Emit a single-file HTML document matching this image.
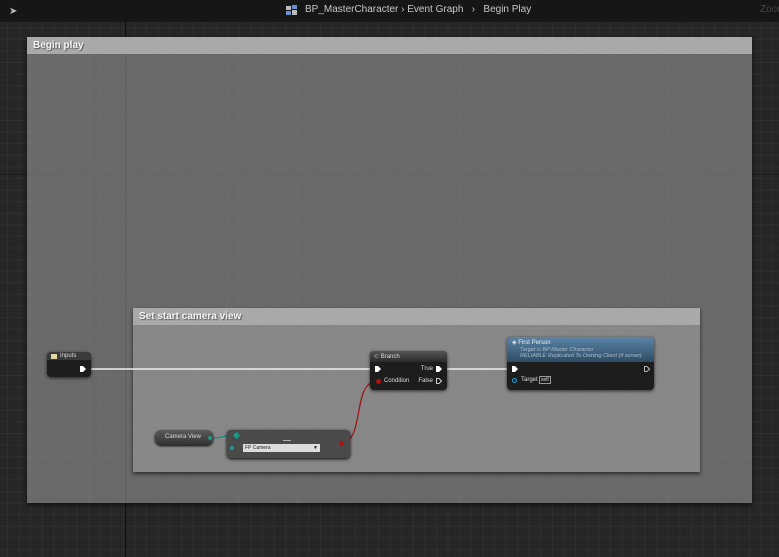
<!DOCTYPE html>
<html><head><meta charset="utf-8"><style>
*{margin:0;padding:0;box-sizing:border-box}
body{width:779px;height:557px;overflow:hidden;position:relative;font-family:"Liberation Sans",sans-serif;
background-color:#262626;
background-image:linear-gradient(90deg,rgba(255,255,255,0.035) 1px,transparent 1px),linear-gradient(0deg,rgba(255,255,255,0.035) 1px,transparent 1px);
background-size:11.6px 11.6px;background-position:7px 5px}
.abs{position:absolute}
.top{left:0;top:0;width:779px;height:22px;background:#161616;color:#c8c8c8;font-size:10px}
.cmt{background:rgba(150,150,150,0.6);box-shadow:0 2px 4px rgba(0,0,0,.6)}
.cmth{position:absolute;left:0;top:0;right:0;height:17px;background:#a9a9a9;color:#f4f4f4;font-weight:bold;font-size:10px;line-height:17px;padding-left:6px;text-shadow:1px 1px 1px #555}
.node{background:#1d1d1d;border-radius:4px;box-shadow:0 1px 3px rgba(0,0,0,.7);color:#ddd;font-size:6px}
</style></head><body>
<div class="abs" style="left:125px;top:22px;width:1px;height:535px;background:#0e0e0e"></div>
<div class="abs" style="left:0;top:174px;width:779px;height:1px;background:#1c1c1c"></div>
<div class="abs top">
<div class="abs" style="left:9px;top:6px;color:#bbb;font-size:10px">&#10148;</div>
<div class="abs" style="left:286px;top:5px;width:12px;height:12px">
<div class="abs" style="left:0;top:1px;width:5px;height:4px;background:#bbb"></div><div class="abs" style="left:6px;top:0;width:5px;height:4px;background:#6b8fcf"></div><div class="abs" style="left:0;top:6px;width:5px;height:4px;background:#6b8fcf"></div><div class="abs" style="left:6px;top:5px;width:5px;height:5px;background:#bbb"></div></div>
<div class="abs" style="left:305px;top:4px">BP_MasterCharacter &rsaquo; Event Graph &nbsp;&nbsp;&rsaquo;&nbsp;&nbsp; Begin Play</div>
<div class="abs" style="left:760px;top:4px;color:#444">Zoom</div>
</div>
<div class="abs cmt" style="left:27px;top:37px;width:725px;height:466px"><div class="cmth">Begin play</div></div>
<div class="abs cmt" style="left:133px;top:308px;width:567px;height:164px;background:rgba(165,165,165,0.5)"><div class="cmth">Set start camera view</div></div>
<svg class="abs" style="left:0;top:0" width="779" height="557">
<line x1="88" y1="369" x2="375" y2="369" stroke="#f0f0f0" stroke-width="1.5"/>
<line x1="440" y1="369" x2="512" y2="369" stroke="#f0f0f0" stroke-width="1.5"/>
<path d="M342 443 C365 440,352 384,376 381" stroke="#a01010" stroke-width="1.2" fill="none"/>
<path d="M212 438 C225 438,222 435,235 435" stroke="#1a8a80" stroke-width="1.2" fill="none"/>
</svg>
<div class="abs node" style="left:47px;top:352px;width:44px;height:25px">
<div class="abs" style="left:0;top:0;right:0;height:8px;background:#3a3a3a;border-radius:4px 4px 0 0"></div>
<div class="abs" style="left:4px;top:2px;width:6px;height:5px;background:#e0d8a0"></div>
<div class="abs" style="left:13px;top:1px">Inputs</div>
<svg class="abs" style="left:33px;top:14px" width="6" height="6"><path d="M0 0H3L6 3L3 6H0Z" fill="#fff"/></svg></div>
<div class="abs node" style="left:370px;top:351px;width:77px;height:39px">
<div class="abs" style="left:0;top:0;right:0;height:11px;background:linear-gradient(#555,#2a2a2a);border-radius:4px 4px 0 0"></div>
<div class="abs" style="left:4px;top:2px">&#8834; Branch</div>
<svg class="abs" style="left:5px;top:15px" width="6" height="6"><path d="M0 0H3L6 3L3 6H0Z" fill="#fff"/></svg>
<div class="abs" style="right:14px;top:15px">True</div>
<svg class="abs" style="left:66px;top:15px" width="6" height="6"><path d="M0 0H3L6 3L3 6H0Z" fill="#fff"/></svg>
<div class="abs" style="left:6px;top:28px;width:5px;height:5px;border-radius:50%;background:#b01010"></div>
<div class="abs" style="left:14px;top:27px">Condition</div>
<div class="abs" style="right:14px;top:27px">False</div>
<svg class="abs" style="left:66px;top:27px" width="6" height="6"><path d="M0.5 .5H3L5.5 3L3 5.5H.5Z" fill="none" stroke="#fff" stroke-width=".8"/></svg></div>
<div class="abs node" style="left:507px;top:337px;width:147px;height:53px">
<div class="abs" style="left:0;top:0;right:0;height:25px;background:linear-gradient(#5a84a8,#2e4b63);border-radius:4px 4px 0 0"></div>
<div class="abs" style="left:5px;top:2px;color:#eee">&#9672; First Person</div>
<div class="abs" style="left:13px;top:10px;color:#a9bccb;font-style:italic;font-size:5.5px;line-height:6px">Target is BP Master Character<br>RELIABLE Replicated To Owning Client (if server)</div>
<svg class="abs" style="left:5px;top:29px" width="6" height="6"><path d="M0 0H3L6 3L3 6H0Z" fill="#fff"/></svg>
<svg class="abs" style="left:137px;top:29px" width="6" height="6"><path d="M0.5 .5H3L5.5 3L3 5.5H.5Z" fill="none" stroke="#ddd" stroke-width=".8"/></svg>
<div class="abs" style="left:5px;top:41px;width:5px;height:5px;border-radius:50%;border:1.3px solid #2aa0e0"></div>
<div class="abs" style="left:14px;top:40px">Target</div>
<div class="abs" style="left:32px;top:39px;border:1px solid #999;padding:0 1px;font-size:5px">self</div></div>
<div class="abs" style="left:155px;top:430px;width:58px;height:15px;border-radius:6px;background:linear-gradient(#5a5a5a,#333);box-shadow:0 1px 2px #000;color:#ddd;font-size:6px;line-height:15px;padding-left:10px">Camera View</div>
<div class="abs" style="left:208px;top:436px;width:4px;height:4px;border-radius:50%;background:#1a9a8a"></div>
<div class="abs" style="left:227px;top:430px;width:123px;height:28px;border-radius:4px;background:#4a4a4a;box-shadow:0 1px 3px #000">
<div class="abs" style="left:7px;top:3px;width:5px;height:5px;background:#1a9a8a;transform:rotate(45deg)"></div>
<div class="abs" style="left:3px;top:16px;width:4px;height:4px;border-radius:50%;background:#1a9a8a"></div>
<div class="abs" style="left:16px;top:14px;width:77px;height:8px;background:#ddd;color:#222;font-size:5px;line-height:8px;padding-left:2px">FP Camera<span style="float:right;margin-right:2px">&#9660;</span></div>
<div class="abs" style="left:56px;top:10px;width:8px;height:1px;background:#aaa"></div>
<div class="abs" style="left:112px;top:11px;width:5px;height:5px;border-radius:50%;background:#b01010"></div></div>
</body></html>
